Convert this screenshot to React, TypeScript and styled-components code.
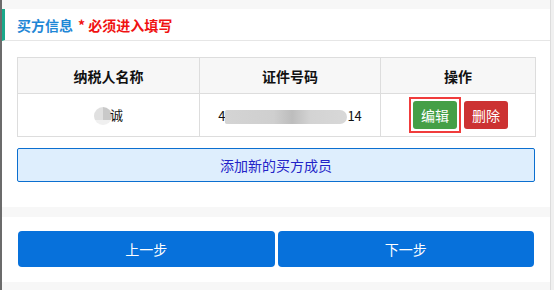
import React from "react";
import styled, { createGlobalStyle } from "styled-components";

const Global = createGlobalStyle`
  html, body { margin: 0; padding: 0; background: #f7f7f7; }
  body { font-family: "Noto Sans CJK SC", "Noto Sans", "Liberation Sans", sans-serif; }
  * { box-sizing: border-box; }
`;

const Frame = styled.div`
  display: flex;
  width: 554px;
  height: 290px;
  overflow: hidden;
  background: #f7f7f7;
`;

const LeftBar = styled.div`
  width: 2px;
  background: #6b6b6b;
  flex: none;
`;

const Main = styled.div`
  width: 548px;
  flex: none;
  display: flex;
  flex-direction: column;
  padding-top: 9px;
  gap: 10px;
`;

const RightStrip = styled.div`
  flex: 1;
  background: #f0f0f0;
  border-left: 1px solid #dcdcdc;
`;

const Panel = styled.section<{ $pad?: string }>`
  background: #fff;
  padding: ${(p) => p.$pad || "0"};
`;

const Header = styled.div`
  height: 32px;
  display: flex;
  align-items: center;
  border-left: 3px solid #1aa88a;
  border-bottom: 1px solid #e6e6e6;
  padding-left: 12px;
  font-size: 14px;
  font-weight: 700;
`;

const TitleBlue = styled.span`
  color: #1f87d6;
`;

const TitleRed = styled.span`
  color: #f01212;
  margin-left: 5px;
`;

const Body = styled.div`
  padding: 16px 13px 25px 15px;
  display: flex;
  flex-direction: column;
  gap: 11px;
`;

const Table = styled.table`
  width: 518px;
  border-collapse: collapse;
  table-layout: fixed;
  font-size: 14px;
  color: #111;
`;

const Th = styled.th`
  height: 36px;
  background: #f7f7f7;
  border: 1px solid #dddddd;
  font-weight: 700;
  text-align: center;
  padding: 0;
`;

const Td = styled.td`
  height: 43px;
  border: 1px solid #dddddd;
  text-align: center;
  padding: 0;
  font-size: 13px;
`;

const Blur = styled.span<{ $w: number }>`
  display: inline-block;
  width: ${(p) => p.$w}px;
  height: 14px;
  vertical-align: middle;
  background: linear-gradient(90deg, #d4d4d4, #cfcfcf 40%, #bdbdbd 55%, #d3d3d3 70%, #d8d8d8);
  border-radius: 2px 8px 8px 2px;
  filter: blur(0.5px);
`;

const NameBlob = styled.span`
  display: inline-block;
  width: 18px;
  height: 18px;
  border-radius: 50%;
  vertical-align: middle;
  background: linear-gradient(180deg, transparent 70%, #f0f0f0 70%),
    linear-gradient(90deg, #e0e0e0 50%, #c9c9c9 50%);
  margin-right: -2px;
`;

const Ops = styled.div`
  display: flex;
  align-items: center;
  justify-content: center;
  gap: 3px;
  padding-left: 1px;
`;

const Focus = styled.div`
  border: 2px solid #f03c3c;
  padding: 2px;
  display: flex;
`;

const SmallBtn = styled.button<{ $bg: string }>`
  height: 28px;
  padding: 0 8px;
  border: none;
  border-radius: 3px;
  background: ${(p) => p.$bg};
  color: #fff;
  font-family: inherit;
  font-size: 14px;
  cursor: pointer;
`;

const AddButton = styled.button`
  width: 518px;
  height: 34px;
  border: 1px solid #0b6fd0;
  border-radius: 2px;
  background: #deeefd;
  color: #2323c8;
  font-family: inherit;
  font-size: 14px;
  cursor: pointer;
`;

const NavRow = styled.div`
  display: flex;
  gap: 3px;
  padding: 0 16px 0 16px;
`;

const NavButton = styled.button`
  flex: 1;
  height: 36px;
  border: none;
  border-radius: 4px;
  background: #0771db;
  color: #fff;
  font-family: inherit;
  font-size: 14px;
  cursor: pointer;
`;

export default function App() {
  return (
    <>
      <Global />
      <Frame>
        <LeftBar />
        <Main>
          <Panel>
            <Header>
              <TitleBlue>买方信息</TitleBlue>
              <TitleRed>* 必须进入填写</TitleRed>
            </Header>
            <Body>
              <Table>
                <colgroup>
                  <col style={{ width: "182px" }} />
                  <col style={{ width: "181px" }} />
                  <col style={{ width: "155px" }} />
                </colgroup>
                <thead>
                  <tr>
                    <Th>纳税人名称</Th>
                    <Th>证件号码</Th>
                    <Th>操作</Th>
                  </tr>
                </thead>
                <tbody>
                  <tr>
                    <Td>
                      <NameBlob />诚
                    </Td>
                    <Td>
                      4<Blur $w={122} />14
                    </Td>
                    <Td>
                      <Ops>
                        <Focus>
                          <SmallBtn $bg="#459f47">编辑</SmallBtn>
                        </Focus>
                        <SmallBtn $bg="#cc3232">删除</SmallBtn>
                      </Ops>
                    </Td>
                  </tr>
                </tbody>
              </Table>
              <AddButton>添加新的买方成员</AddButton>
            </Body>
          </Panel>
          <Panel $pad="14px 0 15px">
            <NavRow>
              <NavButton>上一步</NavButton>
              <NavButton>下一步</NavButton>
            </NavRow>
          </Panel>
        </Main>
        <RightStrip />
      </Frame>
    </>
  );
}
